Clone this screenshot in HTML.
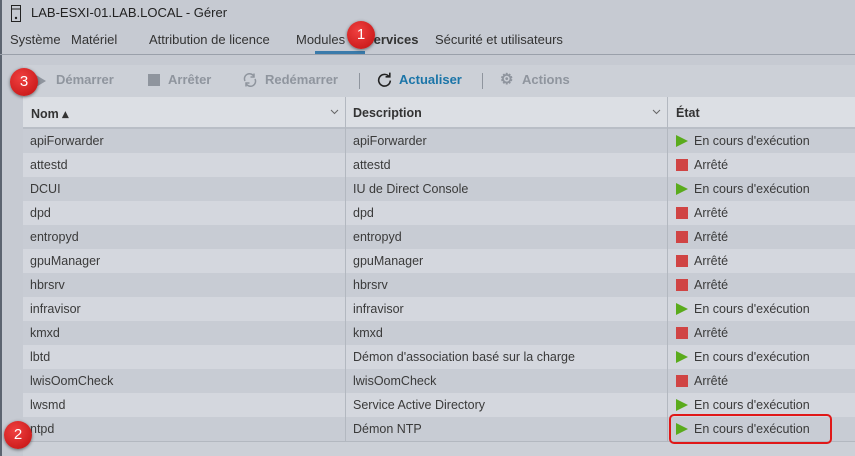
<!DOCTYPE html>
<html><head><meta charset="utf-8">
<style>
*{margin:0;padding:0;box-sizing:border-box}
body{width:855px;height:456px;overflow:hidden;background:#c6cad2;font-family:"Liberation Sans",sans-serif;font-size:12px;color:#333;position:relative}
.edge{position:absolute;left:0;top:0;width:2px;height:456px;background:#5c6470}
.title{position:absolute;left:31px;top:5px;font-size:13px;color:#222}
.tabs{position:absolute;left:0;top:32px;width:855px;height:23px;border-bottom:1px solid #9aa0aa}
.tab{position:absolute;top:0;font-size:13px;color:#333}
.ul{position:absolute;left:315px;top:51px;width:50px;height:3px;background:#3a7bab}
.tb{position:absolute;left:23px;top:65px;width:832px;height:32px;background:#ccd0d7}
.tbi{position:absolute;top:7px;font-size:13px;font-weight:bold;color:#8f959e}
.sep{position:absolute;top:8px;width:1px;height:16px;background:#8f959e}
.thead{position:absolute;left:23px;top:97px;width:832px;height:32px;background:#dcdfe4;border-bottom:2px solid #b9bec6}
.th{position:absolute;top:9px;font-weight:bold;font-size:12.5px;color:#333}
.chev{position:absolute;top:12px}
.row{position:absolute;left:23px;width:832px;height:24px}
.row span{position:absolute;top:5px;font-size:12.5px;color:#3a3a3a}
.vl{position:absolute;top:97px;width:1px;height:344px;background:#b3b8c0}
.run{position:absolute;left:9px;top:6px;width:0;height:0;border-left:12px solid #5aab1c;border-top:6.5px solid transparent;border-bottom:6.5px solid transparent}
.stop{position:absolute;left:9px;top:6px;width:12px;height:12px;background:#d04444}
.badge{position:absolute;width:28px;height:28px;border-radius:50%;background:radial-gradient(circle at 40% 35%,#f04040,#c01010);color:#fff;font-size:15px;text-align:center;line-height:28px;box-shadow:0 1px 3px rgba(0,0,0,.5)}
</style></head><body>
<div class="edge"></div>
<svg style="position:absolute;left:11px;top:5px" width="10" height="17"><rect x="0.5" y="0.5" width="9" height="16" fill="none" stroke="#222"/><line x1="1" y1="4" x2="9" y2="4" stroke="#222"/><circle cx="5" cy="13" r="1.2" fill="#222"/></svg>
<div class="title">LAB-ESXI-01.LAB.LOCAL - Gérer</div>
<div class="tabs">
<div class="tab" style="left:10px">Système</div>
<div class="tab" style="left:71px">Matériel</div>
<div class="tab" style="left:149px">Attribution de licence</div>
<div class="tab" style="left:296px">Modules</div>
<div class="tab" style="left:365px;font-weight:bold">Services</div>
<div class="tab" style="left:435px">Sécurité et utilisateurs</div>
</div>
<div class="ul"></div>
<div class="tb">
<div style="position:absolute;left:13px;top:10px;border-left:10px solid #8f959e;border-top:6px solid transparent;border-bottom:6px solid transparent"></div>
<div class="tbi" style="left:33px">Démarrer</div>
<div style="position:absolute;left:125px;top:9px;width:12px;height:12px;background:#8f959e"></div>
<div class="tbi" style="left:145px">Arrêter</div>
<svg style="position:absolute;left:219px;top:7px" width="16" height="16" viewBox="0 0 16 16" fill="none" stroke="#8f959e" stroke-width="1.5"><path d="M3 9A5 5 0 0 1 12 4.5M13 7A5 5 0 0 1 4 11.5"/><path d="M12 1.5V5H8.5M4 14.5V11H7.5"/></svg>
<div class="tbi" style="left:242px">Redémarrer</div>
<div class="sep" style="left:336px"></div>
<svg style="position:absolute;left:353px;top:6px" width="17" height="17" viewBox="0 0 16 16" fill="none" stroke="#222" stroke-width="1.5"><path d="M12.5 5.5A5.5 5.5 0 1 0 13.5 9"/><path d="M13 1.5V5.5H9" /></svg>
<div class="tbi" style="left:376px;color:#1b75a8">Actualiser</div>
<div class="sep" style="left:459px"></div>
<div class="tbi" style="left:477px;font-size:15px;top:5px">⚙</div>
<div class="tbi" style="left:499px">Actions</div>
</div>
<div class="thead">
<div class="th" style="left:8px">Nom ▴</div><svg class="chev" style="left:307px" width="9" height="6"><path d="M1 1L4.5 4.5L8 1" fill="none" stroke="#666" stroke-width="1"/></svg>
<div class="th" style="left:330px">Description</div><svg class="chev" style="left:629px" width="9" height="6"><path d="M1 1L4.5 4.5L8 1" fill="none" stroke="#666" stroke-width="1"/></svg>
<div class="th" style="left:653px">État</div>
</div>
<div class="row" style="top:129px;background:#c8ccd4"><span style="left:7px">apiForwarder</span><span style="left:330px">apiForwarder</span><div style="position:absolute;left:644px;top:0"><div class="run"></div></div><span style="left:671px">En cours d'exécution</span></div>
<div class="row" style="top:153px;background:#d4d7de"><span style="left:7px">attestd</span><span style="left:330px">attestd</span><div style="position:absolute;left:644px;top:0"><div class="stop"></div></div><span style="left:671px">Arrêté</span></div>
<div class="row" style="top:177px;background:#c8ccd4"><span style="left:7px">DCUI</span><span style="left:330px">IU de Direct Console</span><div style="position:absolute;left:644px;top:0"><div class="run"></div></div><span style="left:671px">En cours d'exécution</span></div>
<div class="row" style="top:201px;background:#d4d7de"><span style="left:7px">dpd</span><span style="left:330px">dpd</span><div style="position:absolute;left:644px;top:0"><div class="stop"></div></div><span style="left:671px">Arrêté</span></div>
<div class="row" style="top:225px;background:#c8ccd4"><span style="left:7px">entropyd</span><span style="left:330px">entropyd</span><div style="position:absolute;left:644px;top:0"><div class="stop"></div></div><span style="left:671px">Arrêté</span></div>
<div class="row" style="top:249px;background:#d4d7de"><span style="left:7px">gpuManager</span><span style="left:330px">gpuManager</span><div style="position:absolute;left:644px;top:0"><div class="stop"></div></div><span style="left:671px">Arrêté</span></div>
<div class="row" style="top:273px;background:#c8ccd4"><span style="left:7px">hbrsrv</span><span style="left:330px">hbrsrv</span><div style="position:absolute;left:644px;top:0"><div class="stop"></div></div><span style="left:671px">Arrêté</span></div>
<div class="row" style="top:297px;background:#d4d7de"><span style="left:7px">infravisor</span><span style="left:330px">infravisor</span><div style="position:absolute;left:644px;top:0"><div class="run"></div></div><span style="left:671px">En cours d'exécution</span></div>
<div class="row" style="top:321px;background:#c8ccd4"><span style="left:7px">kmxd</span><span style="left:330px">kmxd</span><div style="position:absolute;left:644px;top:0"><div class="stop"></div></div><span style="left:671px">Arrêté</span></div>
<div class="row" style="top:345px;background:#d4d7de"><span style="left:7px">lbtd</span><span style="left:330px">Démon d'association basé sur la charge</span><div style="position:absolute;left:644px;top:0"><div class="run"></div></div><span style="left:671px">En cours d'exécution</span></div>
<div class="row" style="top:369px;background:#c8ccd4"><span style="left:7px">lwisOomCheck</span><span style="left:330px">lwisOomCheck</span><div style="position:absolute;left:644px;top:0"><div class="stop"></div></div><span style="left:671px">Arrêté</span></div>
<div class="row" style="top:393px;background:#d4d7de"><span style="left:7px">lwsmd</span><span style="left:330px">Service Active Directory</span><div style="position:absolute;left:644px;top:0"><div class="run"></div></div><span style="left:671px">En cours d'exécution</span></div>
<div class="row" style="top:417px;background:#c8ccd4"><span style="left:7px">ntpd</span><span style="left:330px">Démon NTP</span><div style="position:absolute;left:644px;top:0"><div class="run"></div></div><span style="left:671px">En cours d'exécution</span></div>
<div style="position:absolute;left:23px;top:441px;width:832px;height:15px;background:#ccd0d7;border-top:1px solid #b3b8c0"></div>
<div class="vl" style="left:345px"></div>
<div class="vl" style="left:667px"></div>
<div style="position:absolute;left:669px;top:414px;width:163px;height:30px;border:2px solid #e01818;border-radius:5px"></div>
<div class="badge" style="left:347px;top:21px">1</div>
<div class="badge" style="left:4px;top:421px">2</div>
<div class="badge" style="left:10px;top:68px">3</div>
</body></html>
